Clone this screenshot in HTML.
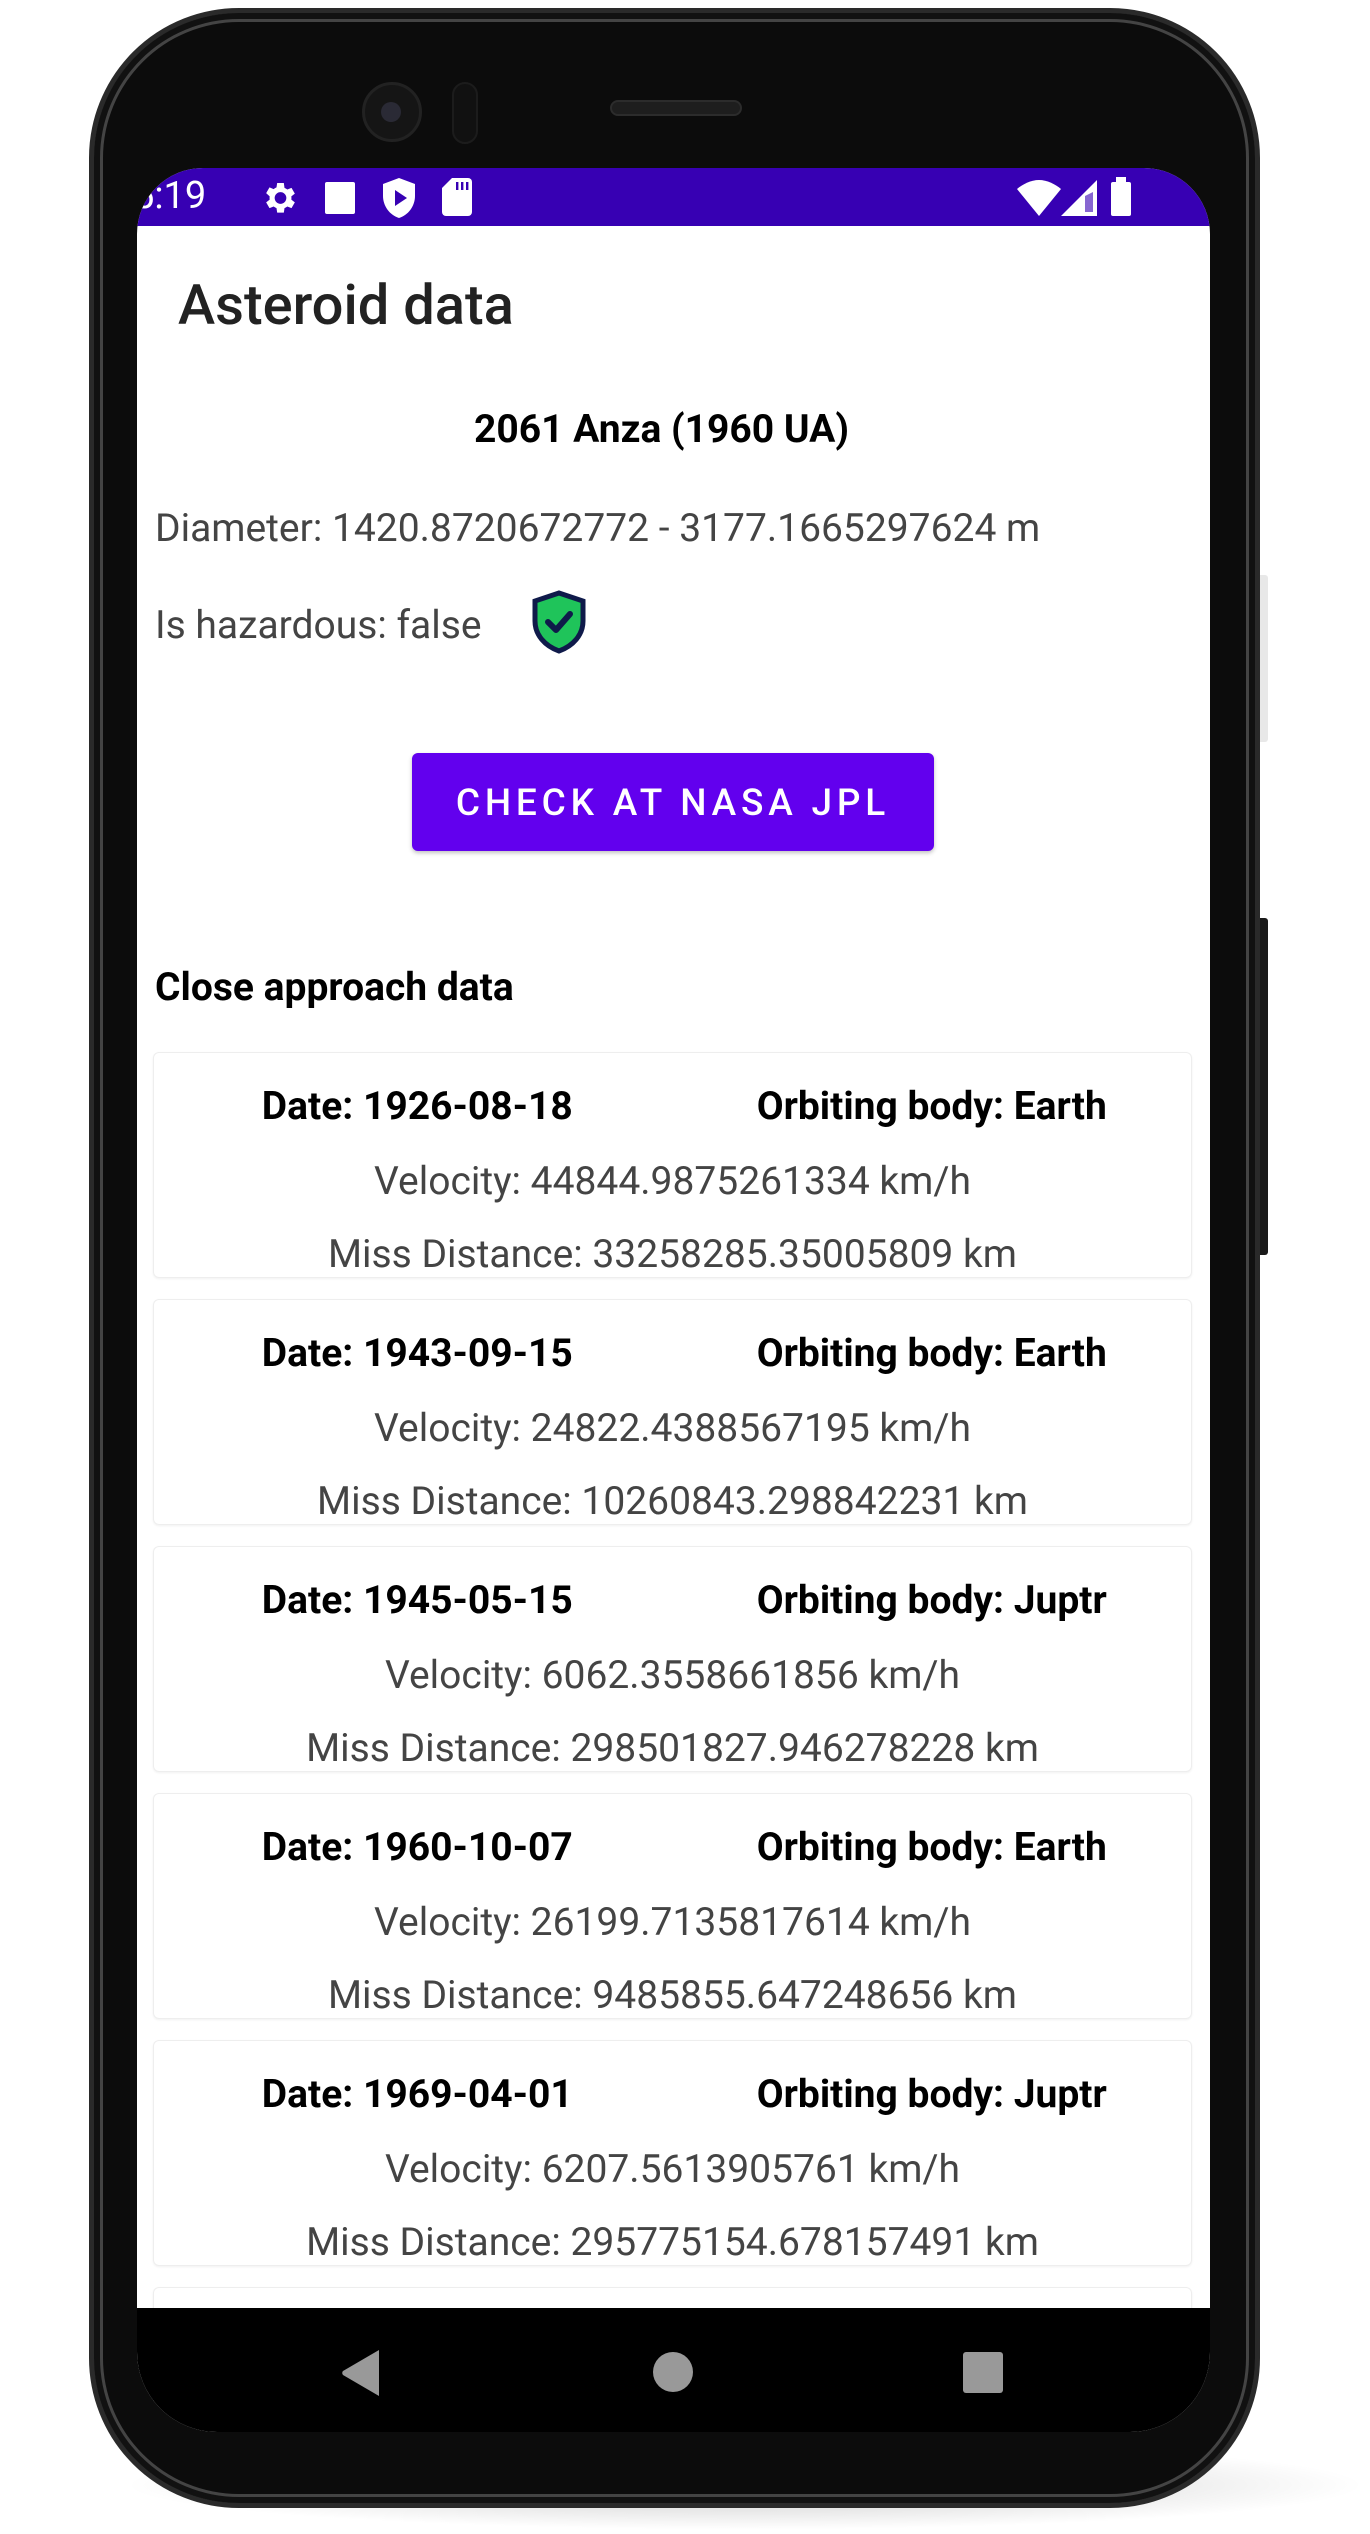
<!DOCTYPE html>
<html><head><meta charset="utf-8"><style>
*{margin:0;padding:0;box-sizing:border-box}
body{width:1370px;height:2534px;background:#fff;position:relative;overflow:hidden;font-family:"Roboto","Liberation Sans",sans-serif}
.abs{position:absolute}
.shadow{left:120px;top:2440px;width:1250px;height:90px;border-radius:50%;background:radial-gradient(ellipse at center,rgba(0,0,0,.22),rgba(0,0,0,0) 70%)}
.phone{left:89px;top:8px;width:1171px;height:2500px;background:#0c0c0c;border-radius:150px;border:5px solid #2a2a2a;box-shadow:inset 0 0 0 6px #111,inset 0 0 0 9px #444}
.screen{left:137px;top:168px;width:1073px;height:2264px;background:#fff;border-radius:66px 66px 80px 80px;overflow:hidden}
.status{left:0;top:0;width:100%;height:58px;background:#3700b3}
.nav{left:0;top:2140px;width:100%;height:124px;background:#000}
.t{position:absolute;white-space:nowrap}
.card{position:absolute;left:16px;width:1039px;height:226px;border:1px solid #eee;border-radius:6px;box-shadow:0 1px 2px rgba(0,0,0,.06)}
.row{position:absolute;left:0;width:100%;text-align:center;font-size:39px}
.b{font-weight:bold;color:#000}
.g{color:#444}
.col{position:absolute;width:50%;text-align:center}
</style></head><body>
<div class="abs shadow"></div>
<div class="abs" style="left:1256px;top:575px;width:12px;height:167px;background:#e8e8e8;border-radius:3px"></div>
<div class="abs" style="left:1256px;top:918px;width:12px;height:337px;background:#1a1a1a;border-radius:3px"></div>
<div class="abs phone"></div>
<!-- camera & speaker -->
<div class="abs" style="left:362px;top:82px;width:60px;height:60px;border-radius:50%;background:#151515;border:3px solid #222"></div>
<div class="abs" style="left:381px;top:102px;width:20px;height:20px;border-radius:50%;background:#2a2a35"></div>
<div class="abs" style="left:452px;top:82px;width:26px;height:62px;border-radius:13px;background:#111;border:2px solid #1c1c1c"></div>
<div class="abs" style="left:610px;top:100px;width:132px;height:16px;border-radius:8px;background:#1e1e1e;border:2px solid #2c2c2c"></div>

<div class="abs screen">
  <div class="abs status">
    <div class="t" style="left:-4px;top:6px;color:#fff;font-size:38px">5:19</div>
    <svg class="abs" style="left:122px;top:10px" width="40" height="40" viewBox="0 0 24 24"><path fill="#fff" d="M19.4 13c.04-.3.06-.65.06-1s-.02-.7-.06-1l2.1-1.65-2-3.46-2.5 1a7.3 7.3 0 0 0-1.7-1L14.9 3h-4l-.4 2.650c-.6.25-1.2.6-1.7 1l-2.5-1-2 3.46L6.4 11c-.04.3-.06.65-.06 1s.02.7.06 1l-2.1 1.65 2 3.46 2.5-1c.5.4 1.1.75 1.7 1l.4 2.65h4l.4-2.65c.6-.25 1.2-.6 1.7-1l2.5 1 2-3.46zM12.9 15.5a3.5 3.5 0 1 1 0-7 3.5 3.5 0 0 1 0 7z"/></svg>
    <div class="abs" style="left:188px;top:14px;width:30px;height:32px;background:#fff;border-radius:2px"></div>
    <svg class="abs" style="left:246px;top:10px" width="32" height="40" viewBox="0 0 16 20"><path fill="#fff" d="M8 0L0 3v6c0 5 3.4 9.6 8 11 4.6-1.4 8-6 8-11V3z"/><path fill="#3700b3" d="M6 6v8l6-4z"/></svg>
    <svg class="abs" style="left:305px;top:10px" width="30" height="38" viewBox="0 0 15 19"><path fill="#fff" d="M5 0h8a2 2 0 0 1 2 2v15a2 2 0 0 1-2 2H2a2 2 0 0 1-2-2V5z"/><path fill="#3700b3" d="M7 2h1.2v4H7zM9.5 2h1.2v4H9.5zM12 2h1.2v4H12z"/></svg>
    <svg class="abs" style="left:880px;top:12px" width="44" height="36" viewBox="0 0 22 18"><path fill="#fff" d="M11 18L0 4.5C3 2 7 0 11 0s8 2 11 4.5z"/></svg>
    <svg class="abs" style="left:924px;top:12px" width="36" height="36" viewBox="0 0 18 18"><path fill="#fff" d="M18 0v18H0z"/><path fill="#3700b3" d="M12 8v8h4V6z" opacity=".6"/></svg>
    <div class="abs" style="left:974px;top:14px;width:20px;height:34px;background:#fff;border-radius:2px"></div>
    <div class="abs" style="left:979px;top:9px;width:10px;height:6px;background:#fff"></div>
  </div>

  <div class="t" style="left:41px;top:104px;font-size:56px;color:#222;font-weight:500">Asteroid data</div>
  <div class="t b" style="left:-12px;width:1073px;text-align:center;top:238px;font-size:39px">2061 Anza (1960 UA)</div>
  <div class="t g" style="left:18px;top:337px;font-size:39px">Diameter: 1420.8720672772 - 3177.1665297624 m</div>
  <div class="t g" style="left:18px;top:434px;font-size:39px">Is hazardous: false</div>
  <svg class="abs" style="left:392px;top:422px" width="60" height="64" viewBox="0 0 30 32"><path fill="#1fc45a" stroke="#0f1a4a" stroke-width="2.5" d="M15 1.5L3 5.5v10c0 7 5 12.5 12 15 7-2.5 12-8 12-15v-10z"/><path fill="none" stroke="#0f1a4a" stroke-width="3" stroke-linecap="round" stroke-linejoin="round" d="M9.5 16l4 4 7-8"/></svg>

  <div class="abs" style="left:275px;top:585px;width:522px;height:98px;background:#6200ee;border-radius:6px;box-shadow:0 2px 4px rgba(0,0,0,.25)"></div>
  <div class="t" style="left:275px;width:522px;text-align:center;top:614px;font-size:37px;color:#fff;letter-spacing:4.8px;font-weight:500">CHECK AT NASA JPL</div>

  <div class="t b" style="left:18px;top:796px;font-size:39px">Close approach data</div>

  <div class="card" style="top:884px">
    <div class="row b" style="top:30px"><div class="col" style="left:4px">Date: 1926-08-18</div><div class="col" style="left:50%">Orbiting body: Earth</div></div>
    <div class="row g" style="top:105px">Velocity: 44844.9875261334 km/h</div>
    <div class="row g" style="top:178px">Miss Distance: 33258285.35005809 km</div>
  </div>
  <div class="card" style="top:1131px">
    <div class="row b" style="top:30px"><div class="col" style="left:4px">Date: 1943-09-15</div><div class="col" style="left:50%">Orbiting body: Earth</div></div>
    <div class="row g" style="top:105px">Velocity: 24822.4388567195 km/h</div>
    <div class="row g" style="top:178px">Miss Distance: 10260843.298842231 km</div>
  </div>
  <div class="card" style="top:1378px">
    <div class="row b" style="top:30px"><div class="col" style="left:4px">Date: 1945-05-15</div><div class="col" style="left:50%">Orbiting body: Juptr</div></div>
    <div class="row g" style="top:105px">Velocity: 6062.3558661856 km/h</div>
    <div class="row g" style="top:178px">Miss Distance: 298501827.946278228 km</div>
  </div>
  <div class="card" style="top:1625px">
    <div class="row b" style="top:30px"><div class="col" style="left:4px">Date: 1960-10-07</div><div class="col" style="left:50%">Orbiting body: Earth</div></div>
    <div class="row g" style="top:105px">Velocity: 26199.7135817614 km/h</div>
    <div class="row g" style="top:178px">Miss Distance: 9485855.647248656 km</div>
  </div>
  <div class="card" style="top:1872px">
    <div class="row b" style="top:30px"><div class="col" style="left:4px">Date: 1969-04-01</div><div class="col" style="left:50%">Orbiting body: Juptr</div></div>
    <div class="row g" style="top:105px">Velocity: 6207.5613905761 km/h</div>
    <div class="row g" style="top:178px">Miss Distance: 295775154.678157491 km</div>
  </div>
  <div class="card" style="top:2119px"></div>

  <div class="abs nav">
    <svg class="abs" style="left:204px;top:42px" width="40" height="46" viewBox="0 0 40 46"><path fill="#999" d="M38 0v46L2 25a3 3 0 0 1 0-4z"/></svg>
    <div class="abs" style="left:516px;top:44px;width:40px;height:40px;border-radius:50%;background:#999"></div>
    <div class="abs" style="left:826px;top:44px;width:40px;height:41px;border-radius:3px;background:#999"></div>
  </div>
</div>
</body></html>
